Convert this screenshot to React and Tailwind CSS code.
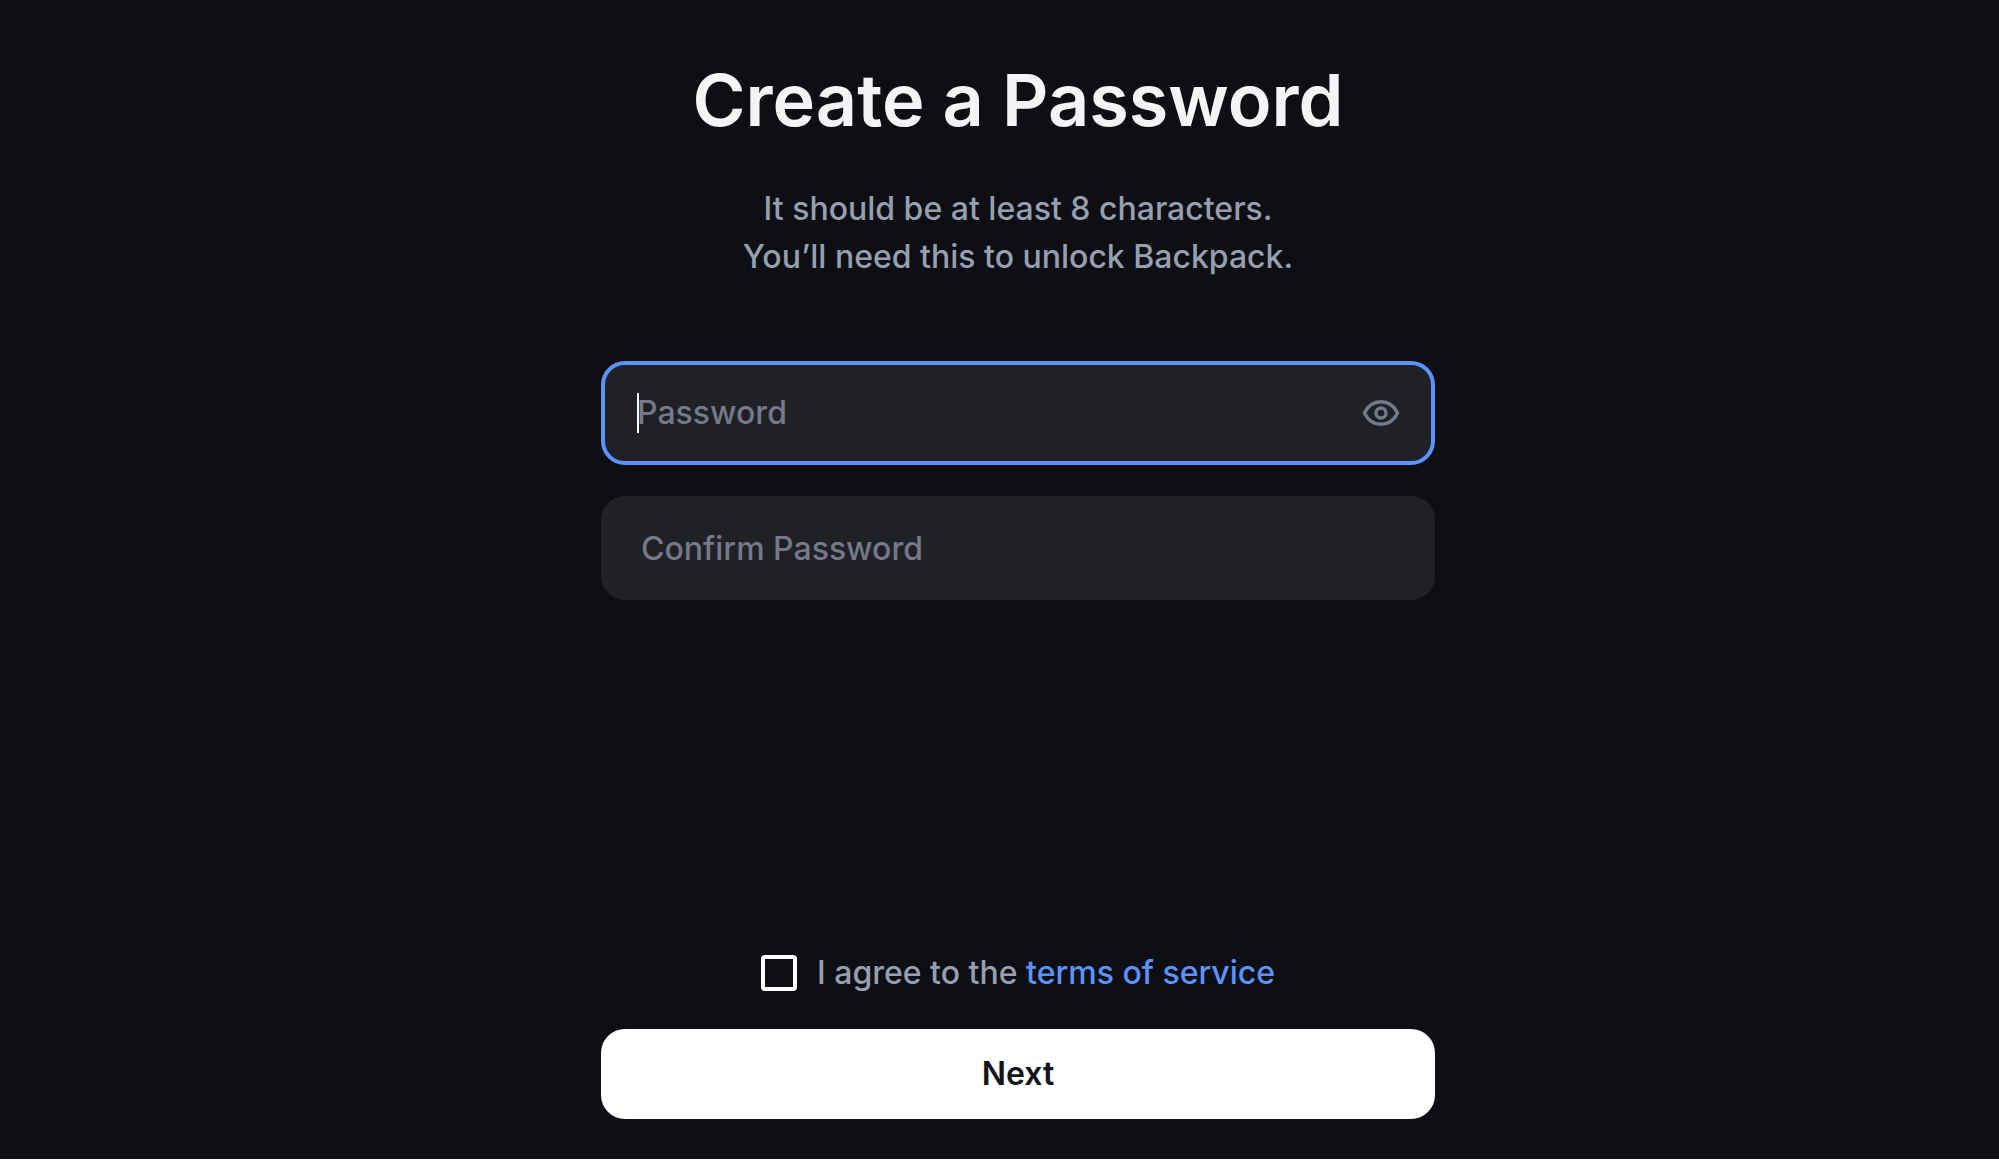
import { useState } from "react";

function EyeIcon() {
  return (
    <svg
      width="40"
      height="32"
      viewBox="0 0 40 32"
      fill="none"
      stroke="currentColor"
      strokeWidth="3.4"
      strokeLinejoin="round"
      aria-hidden="true"
    >
      <path d="M3.4 16C6.8 9 12.8 4.7 20 4.7S33.2 9 36.6 16C33.2 23 27.2 27.3 20 27.3S6.8 23 3.4 16Z" />
      <circle cx="20" cy="16" r="5" />
    </svg>
  );
}

export default function App() {
  const [password, setPassword] = useState("");
  const [confirm, setConfirm] = useState("");
  const [visible, setVisible] = useState(false);
  const [agreed, setAgreed] = useState(false);

  return (
    <main className="flex min-h-screen flex-col border-b border-white bg-[#0e0f14] pt-[60px] pb-10 pl-[37px] font-['Inter',sans-serif] text-[32px] leading-[48px] font-medium text-[#969faf]">
      <form
        className="mx-auto flex w-full max-w-[834px] grow flex-col"
        onSubmit={(e) => e.preventDefault()}
      >
        <h1 className="text-center text-[72px] leading-[80px] font-semibold text-[#f4f4f6]">
          Create a Password
        </h1>
        <p className="mt-[45px] text-center">
          It should be at least 8 characters.
          <br />
          You’ll need this to unlock Backpack.
        </p>

        {/* Fields */}
        <div className="mt-20 flex flex-col gap-[31px]">
          <div className="relative flex h-[104px] items-center gap-4 rounded-3xl border-4 border-[#5c92fb] bg-[#202127] pr-[30px] pl-8">
            {password === "" && (
              <span className="absolute left-8 h-10 w-[2px] bg-white" />
            )}
            <input
              type={visible ? "text" : "password"}
              aria-label="Password"
              placeholder="Password"
              value={password}
              onChange={(e) => setPassword(e.target.value)}
              className="h-12 min-w-0 grow bg-transparent text-[#f4f4f6] outline-none placeholder:text-[#75798a]"
            />
            <button
              type="button"
              aria-label="Show password"
              onClick={() => setVisible(!visible)}
              className="text-[#75798a]"
            >
              <EyeIcon />
            </button>
          </div>
          <input
            type="password"
            aria-label="Confirm Password"
            placeholder="Confirm Password"
            value={confirm}
            onChange={(e) => setConfirm(e.target.value)}
            className="h-[104px] w-full rounded-3xl bg-[#202127] px-10 text-[#f4f4f6] outline-none placeholder:text-[#75798a]"
          />
        </div>

        {/* Terms and submit */}
        <div className="mt-auto flex flex-col gap-8 pt-8">
          <div className="flex items-center justify-center gap-5">
            <input
              id="terms"
              type="checkbox"
              checked={agreed}
              onChange={(e) => setAgreed(e.target.checked)}
              className="size-9 appearance-none rounded-sm border-4 border-white checked:bg-[#5c92fb]"
            />
            <label htmlFor="terms">
              I agree to the{" "}
              <a href="#terms" className="text-[#5c92fb]">
                terms of service
              </a>
            </label>
          </div>
          <button
            type="submit"
            className="h-[90px] w-full rounded-3xl bg-white font-semibold text-[#14151b]"
          >
            Next
          </button>
        </div>
      </form>
    </main>
  );
}
